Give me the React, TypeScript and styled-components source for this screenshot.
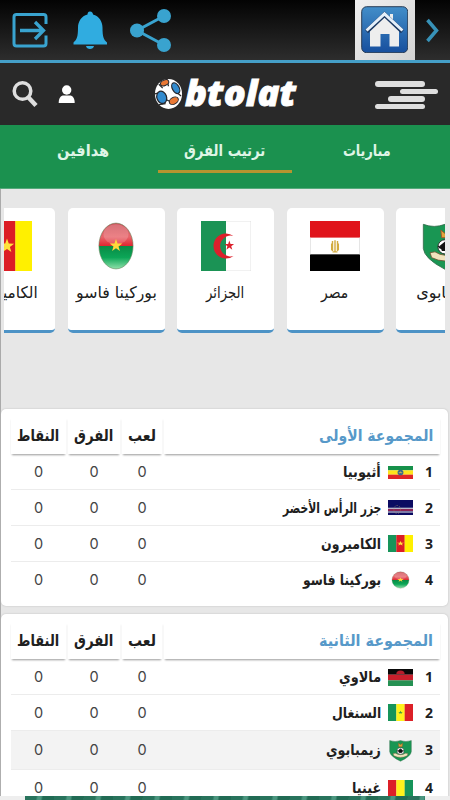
import React, { useLayoutEffect, useRef, useState } from "react";
import styled, { createGlobalStyle } from "styled-components";

const Global = createGlobalStyle`
  * { box-sizing: border-box; }
  html, body { margin: 0; height: 100%; overflow: hidden; background: #e7e7e7; }
  body { font-family: "DejaVu Sans", sans-serif; color: #202020; }
`;

const Page = styled.div`
  width: 450px;
  height: 800px;
  overflow: hidden;
  display: flex;
  flex-direction: column;
  background: #e7e7e7;
`;
const TopBar = styled.div`
  flex: none;
  height: 63px;
  display: flex;
  align-items: flex-start;
  justify-content: space-between;
  background: linear-gradient(#030303, #2d2d2d 60px);
  border-bottom: 3px solid #459fc8;
`;
const TopActions = styled.div`
  display: flex;
  height: 60px;
  padding-left: 12px;
`;
const HomeGroup = styled.div`
  display: flex;
  height: 60px;
  gap: 11px;
  padding-right: 10px;
`;
const HomeTile = styled.div`
  width: 60px;
  height: 60px;
  padding: 6px 7px 7px 6px;
  background: linear-gradient(135deg, #f0f0f0, #d3d3d3);
`;
const Header = styled.header`
  flex: none;
  height: 62px;
  background: #292929;
  display: grid;
  grid-template-columns: 154px 142px 1fr;
`;
const HeaderIcons = styled.div`
  display: flex;
  padding-left: 12px;
  gap: 20px;
`;
const Logo = styled.div`
  display: flex;
  align-items: flex-start;
  gap: 2px;
  direction: ltr;
`;
const LogoText = styled.div`
  width: 112px;
  height: 60px;
  display: flex;
  align-items: center;
  font: italic 800 35px/30px "Open Sans", sans-serif;
  color: #fff;
  -webkit-text-stroke: 0.8px #fff;
`;
const Menu = styled.div`
  display: grid;
  grid-template-columns: 63px;
  grid-auto-rows: 5.5px;
  row-gap: 2px;
  padding: 18px 0 0 79px;
`;
const MenuBar = styled.div<{ $l: number; $w: number }>`
  margin-left: ${(p) => p.$l}px;
  width: ${(p) => p.$w}px;
  height: 5.5px;
  border-radius: 3px;
  background: #dedede;
`;
const Tabs = styled.nav`
  flex: none;
  height: 64px;
  display: grid;
  grid-template-columns: 134px 134px 134px;
  column-gap: 8px;
  padding: 0 16px;
  background: #1b914f;
  border-bottom: 1px solid #55a97b;
`;
const Tab = styled.div<{ $active?: boolean }>`
  height: 48px;
  display: flex;
  justify-content: center;
  align-items: center;
  padding-top: 7px;
  font-size: 16px;
  font-weight: 700;
  color: #dff5e6;
  border-bottom: 3px solid ${(p) => (p.$active ? "#b5942f" : "transparent")};
`;
const Body = styled.main`
  flex: 1;
  min-height: 0;
  border-left: 1px solid #aaa;
`;
const Carousel = styled.div`
  height: 125px;
  width: 441px;
  margin: 19px 0 0 3px;
  overflow: hidden;
`;
const Track = styled.div`
  display: flex;
  width: max-content;
  gap: 12.5px;
  margin-left: -46px;
`;
const TeamCard = styled.div`
  width: 97px;
  height: 125px;
  border-radius: 5px;
  border-bottom: 3px solid #4d93c6;
  background: #fff;
  display: flex;
  flex-direction: column;
  align-items: center;
  padding-top: 13px;
`;
const TeamLabel = styled.div`
  height: 43px;
  display: flex;
  align-items: center;
  font-size: 16px;
`;
const Panel = styled.section`
  width: 447px;
  height: 197px;
  margin-top: 8px;
  padding: 8px 8px 0 10px;
  border-radius: 5px;
  background: #fff;
  box-shadow: 0 0 2px #bbb;
  &:first-of-type { margin-top: 76px; }
`;
const Line = styled.div<{ $h: number; $on?: boolean; $last?: boolean }>`
  direction: rtl;
  display: grid;
  grid-template-columns: 276px 40px 52px 55px;
  column-gap: 2px;
  height: ${(p) => p.$h}px;
  background: ${(p) => (p.$on ? "#f3f3f3" : "transparent")};
  border-bottom: 1px solid ${(p) => (p.$last ? "transparent" : "#ececec")};
`;
const HeadLine = styled(Line)`
  border: 0;
  margin-bottom: 1px;
`;
const HeadCell = styled.div<{ $title?: boolean }>`
  display: flex;
  align-items: center;
  justify-content: ${(p) => (p.$title ? "flex-start" : "center")};
  padding-right: ${(p) => (p.$title ? 7 : 0)}px;
  height: 37px;
  font-size: 16px;
  font-weight: 700;
  color: ${(p) => (p.$title ? "#5799c9" : "#202020")};
  box-shadow: 0 2px 2px -1px #999;
`;
const TeamCell = styled.div`
  display: flex;
  align-items: center;
  padding: 0 7px 0 0;
`;
const Rank = styled.span`
  width: 7px;
  margin-left: 13px;
  padding-bottom: 1px;
  font: 700 14px "Noto Sans", sans-serif;
`;
const TeamName = styled.div`
  margin-right: 7px;
  font-size: 15px;
  font-weight: 700;
`;
const Score = styled.div`
  display: flex;
  align-items: center;
  justify-content: center;
  padding-bottom: 1px;
  font: 400 14.5px Inter, sans-serif;
  color: #444;
`;
const Banner = styled.div`
  position: fixed;
  left: 0;
  bottom: 0;
  width: 450px;
  height: 4px;
  padding: 0 25px;
  background: #eee;
`;
const BannerStrip = styled.div`
  height: 4px;
  background: repeating-linear-gradient(100deg, #28735c 0 11px, #4b967f 13px 16px, #216b54 18px 29px);
`;
const FitBox = styled.div`
  flex: none;
  display: flex;
  height: 30px;
  direction: rtl;
`;
const FitText = styled.span`
  flex: none;
  white-space: nowrap;
  line-height: 30px;
  transform-origin: 100% 50%;
`;

/* Condenses or widens a label so that it fills the given width. */
function Fit({ w, children }: { w: number; children: React.ReactNode }) {
  const ref = useRef<HTMLSpanElement>(null);
  const [k, setK] = useState(1);
  useLayoutEffect(() => {
    if (ref.current) setK(w / ref.current.offsetWidth);
  }, [w]);
  return (
    <FitBox style={{ width: w }}>
      <FitText ref={ref} style={{ transform: `scaleX(${k})` }}>{children}</FitText>
    </FitBox>
  );
}

const star = (cx: number, cy: number, r: number) =>
  Array.from({ length: 10 }, (_, i) => {
    const q = i % 2 ? r * 0.4 : r;
    const a = (Math.PI * i) / 5 - Math.PI / 2;
    return `${(cx + q * Math.cos(a)).toFixed(2)},${(cy + q * Math.sin(a)).toFixed(2)}`;
  }).join(" ");

type Code = "cm" | "bf" | "dz" | "eg" | "zw" | "et" | "cv" | "mw" | "sn" | "gn";

function Stripes({ c, vertical }: { c: string[]; vertical?: boolean }) {
  const s = 60 / c.length;
  return (
    <>
      {c.map((f, i) =>
        vertical ? (
          <rect key={i} x={i * s} width={s + 0.3} height="60" fill={f} />
        ) : (
          <rect key={i} y={i * s} width="60" height={s + 0.3} fill={f} />
        )
      )}
    </>
  );
}

const FlagSvg = styled.svg`
  flex: none;
`;

function Flag({ code, w, h }: { code: Code; w: number; h: number }) {
  const id = `g${code}${w}`;
  return (
    <FlagSvg width={w} height={h} viewBox="0 0 60 60" preserveAspectRatio="none">
      {code === "cm" && <><Stripes vertical c={["#17945a", "#dc1d25", "#fff000"]} /><polygon points={star(30, 30, 9)} fill="#ffe23b" /></>}
      {code === "sn" && <><Stripes vertical c={["#16945a", "#fff21c", "#dc2028"]} /><polygon points={star(30, 30, 6)} fill="#3c9442" /></>}
      {code === "gn" && <Stripes vertical c={["#dc2028", "#fff21c", "#16945a"]} />}
      {code === "et" && <><Stripes c={["#16914a", "#ffe41c", "#e02626"]} /><ellipse cx="30" cy="30" rx="7" ry="13" fill="#39688c" /><polygon points={star(30, 30, 6)} fill="#b6b05f" /></>}
      {code === "mw" && <><Stripes c={["#080808", "#c81f2c", "#259153"]} /><path d="M20 18a10 13 0 0 1 20 0z" fill="#b51d2b" /></>}
      {code === "cv" && <><rect width="60" height="60" fill="#0b0b62" /><path d="M0 33h60M0 48h60" stroke="#eee" strokeWidth="4" /><path d="M0 40h60" stroke="#b62c52" strokeWidth="6" /><ellipse cx="22" cy="38" rx="8" ry="16" fill="none" stroke="#b19a65" strokeWidth="2" strokeDasharray="3 4" /></>}
      {code === "eg" && <><Stripes c={["#e0141b", "#fff", "#000"]} /><path d="M.5 20v20M59.5 20v20" stroke="#ddd" /><path d="M27 24v12m6-12v12M26 27v8m8-8v8M30 23v14M27 37h6" stroke="#d2ab3f" strokeWidth="1.7" /></>}
      {code === "dz" && <><rect width="60" height="60" fill="#fff" stroke="#ddd" /><rect width="30" height="60" fill="#1b9355" /><path d="M39 18a15 15 0 1 0 0 24a12.500 12.500 0 1 1 0-24" fill="#dc202c" /><polygon points={star(34, 29.5, 6)} fill="#dc202c" /></>}
      {code === "bf" && (
        <>
          <defs>
            <linearGradient id={id} x2="0" y2="1"><stop stopColor="#cc5159" /><stop offset=".3" stopColor="#e8666c" /><stop offset=".49" stopColor="#de2833" /><stop offset=".5" stopColor="#088a45" /><stop offset=".75" stopColor="#0ca657" /><stop offset="1" stopColor="#8fe0aa" /></linearGradient>
          </defs>
          <ellipse cx="30" cy="30" rx="20.5" ry="27.5" fill={`url(#${id})`} stroke="#68875d" strokeWidth=".7" />
          <ellipse cx="30" cy="16" rx="15" ry="12" fill="#fff" opacity=".18" />
          <polygon points={star(30, 29.5, 8)} fill="#ffd83b" />
        </>
      )}
      {code === "zw" && (
        <>
          <path d="M4 4q13 5 26 0q13 5 26 0v29q-1 12-26 25Q5 45 4 33z" fill="#199653" stroke="#346b4b" />
          <path d="M12 38l6-1q12 8 24 0l6 1-2 6q-16 8-32 0z" fill="#f0e3bd" stroke="#695330" />
          <circle cx="30" cy="31" r="8.500" fill="#fff" stroke="#222" />
          <path d="M30 26l5 4-2 5h-6l-2-5zM22 30l3 3m13-3-3 3" fill="#111" stroke="#111" strokeWidth="2" />
          <path d="M25 11l5 4 5-4-1 9h-8z" fill="#e1a43a" stroke="#a74b28" />
        </>
      )}
    </FlagSvg>
  );
}

const cards: [Code, string, number][] = [
  ["cm", "الكاميرون", 62],
  ["bf", "بوركينا فاسو", 81],
  ["dz", "الجزائر", 38],
  ["eg", "مصر", 27],
  ["zw", "زيمبابوى", 56],
];

interface Team { code: Code; name: string; w: number; fw: number; fh: number; h: number; on?: boolean; last?: boolean }
const groups: { title: string; w: number; teams: Team[] }[] = [
  {
    title: "المجموعة الأولى", w: 114,
    teams: [
      { code: "et", name: "أثيوبيا", w: 38, fw: 25, fh: 13, h: 35 },
      { code: "cv", name: "جزر الرأس الأخضر", w: 98, fw: 25, fh: 15, h: 36 },
      { code: "cm", name: "الكاميرون", w: 60, fw: 25, fh: 17, h: 36 },
      { code: "bf", name: "بوركينا فاسو", w: 78, fw: 25, fh: 18, h: 37, last: true },
    ],
  },
  {
    title: "المجموعة الثانية", w: 114,
    teams: [
      { code: "mw", name: "مالاوي", w: 42, fw: 25, fh: 17, h: 35 },
      { code: "sn", name: "السنغال", w: 49, fw: 25, fh: 17, h: 36 },
      { code: "zw", name: "زيمبابوي", w: 55, fw: 25, fh: 23, h: 39, on: true },
      { code: "gn", name: "غينيا", w: 29, fw: 25, fh: 17, h: 37, last: true },
    ],
  },
];

export default function App() {
  return (
    <Page>
      <Global />
      <TopBar>
        <TopActions>
          <svg width="170" height="60" viewBox="12 0 170 60" fill="none" stroke="#39a3cf" strokeWidth="3">
            <path d="M46 24v-7q0-2.500-2.500-2.500h-27Q14 14.500 14 17v26.500q0 2.500 2.500 2.500h27q2.500 0 2.500-2.500v-8" />
            <path d="M20 30.500h23M35 22l8.500 8.500L35 39" strokeWidth="3.300" />
            <path d="M90 11.500c2 0 3 1.500 3 3 6 1.500 9.500 7 9.500 13 0 9 1 12 4.500 15v2H73.500v-2c3.500-3 4.500-6 4.500-15 0-6 3.500-11.500 9.500-13 0-1.500.5-3 2.500-3zM86 46h8c-.5 4-7.500 4-8 0z" fill="#30ace0" stroke="none" />
            <path d="M164 16l-27 14.500L164 45" />
            <g fill="#39a3cf" stroke="none"><circle cx="164" cy="16" r="7" /><circle cx="137" cy="30.500" r="7" /><circle cx="164" cy="45" r="7" /></g>
          </svg>
        </TopActions>
        <HomeGroup>
          <HomeTile>
            <svg width="47" height="47" viewBox="0 0 47 47">
              <defs><linearGradient id="home" x2="0" y2="1"><stop stopColor="#428ec9" /><stop offset="1" stopColor="#174f9e" /></linearGradient></defs>
              <rect x=".7" y=".7" width="46" height="46" rx="5" fill="url(#home)" stroke="#2b3e57" />
              <path d="M29 8h3v7l-3-3z" fill="#eee" />
              <path d="M9 24L23.500 11 38 24v16.500h-9.500V28h-9v12.500H9z" fill="#eee" />
              <path d="M5.500 25.500L23.500 8.500l18 17" fill="none" stroke="#1b3963" strokeWidth="4.500" />
              <path d="M5.500 24.500L23.500 7.800l18 16.700" fill="none" stroke="#e4effa" strokeWidth="3" />
            </svg>
          </HomeTile>
          <svg width="14" height="60" viewBox="0 0 14 60"><path d="M1.500 20l9 10.500-9 10.500" fill="none" stroke="#3792b8" strokeWidth="3.500" /></svg>
        </HomeGroup>
      </TopBar>
      <Header>
        <HeaderIcons>
          <svg width="26" height="60" viewBox="0 0 26 60"><circle cx="10.500" cy="28" r="8.300" fill="none" stroke="#dedede" strokeWidth="3.500" /><path d="M16.500 34.500l7.500 8" stroke="#dedede" strokeWidth="4.500" /></svg>
          <svg width="18" height="60" viewBox="0 0 18 60" fill="#fff"><circle cx="8.700" cy="27" r="4.700" /><path d="M.7 40c0-5 2-7.500 5-7.500h6c3 0 5 2.500 5 7.500z" /></svg>
        </HeaderIcons>
        <Logo>
          <svg width="30" height="60" viewBox="0 0 30 60">
            <ellipse cx="15" cy="31" rx="14" ry="15.500" fill="#fff" />
            <path d="M1 31l3-1M5 21l4 4M13 15l2 8M23 29l5 4M13 37l4 2M5 42l7-1" stroke="#292929" strokeWidth="1.300" />
            <ellipse cx="8" cy="34.500" rx="5" ry="6.500" transform="rotate(-20 8 34.500)" fill="#318bcf" stroke="#24262d" strokeWidth="1.300" />
            <ellipse cx="22.500" cy="25" rx="3.500" ry="6" transform="rotate(-28 22.500 25)" fill="#318bcf" stroke="#24262d" strokeWidth="1.300" />
            <ellipse cx="11" cy="19.500" rx="4.500" ry="2.800" transform="rotate(-25 11 19.500)" fill="#e97834" stroke="#24262d" />
            <ellipse cx="20.500" cy="38" rx="5" ry="3.500" transform="rotate(-30 20.500 38)" fill="#e97834" stroke="#24262d" />
          </svg>
          <LogoText><Fit w={111}>btolat</Fit></LogoText>
        </Logo>
        <Menu>
          <MenuBar $l={0} $w={50} />
          <MenuBar $l={25} $w={38} />
          <MenuBar $l={12.5} $w={37.5} />
          <MenuBar $l={0} $w={50} />
        </Menu>
      </Header>
      <Tabs>
        <Tab><Fit w={52}>هدافين</Fit></Tab>
        <Tab $active><Fit w={81}>ترتيب الفرق</Fit></Tab>
        <Tab><Fit w={48}>مباريات</Fit></Tab>
      </Tabs>
      <Body>
        <Carousel>
          <Track>
            {cards.map(([code, name, w]) => (
              <TeamCard key={code}>
                <Flag code={code} w={50} h={50} />
                <TeamLabel><Fit w={w}>{name}</Fit></TeamLabel>
              </TeamCard>
            ))}
          </Track>
        </Carousel>
        {groups.map((g) => (
          <Panel key={g.title}>
            <HeadLine $h={37}>
              <HeadCell $title><Fit w={g.w}>{g.title}</Fit></HeadCell>
              <HeadCell><Fit w={28}>لعب</Fit></HeadCell>
              <HeadCell><Fit w={39}>الفرق</Fit></HeadCell>
              <HeadCell><Fit w={42}>النقاط</Fit></HeadCell>
            </HeadLine>
            {g.teams.map((t, i) => (
              <Line key={t.code} $h={t.h} $on={t.on} $last={t.last}>
                <TeamCell>
                  <Rank>{i + 1}</Rank>
                  <Flag code={t.code} w={t.fw} h={t.fh} />
                  <TeamName><Fit w={t.w}>{t.name}</Fit></TeamName>
                </TeamCell>
                <Score>0</Score>
                <Score>0</Score>
                <Score>0</Score>
              </Line>
            ))}
          </Panel>
        ))}
      </Body>
      <Banner><BannerStrip /></Banner>
    </Page>
  );
}
